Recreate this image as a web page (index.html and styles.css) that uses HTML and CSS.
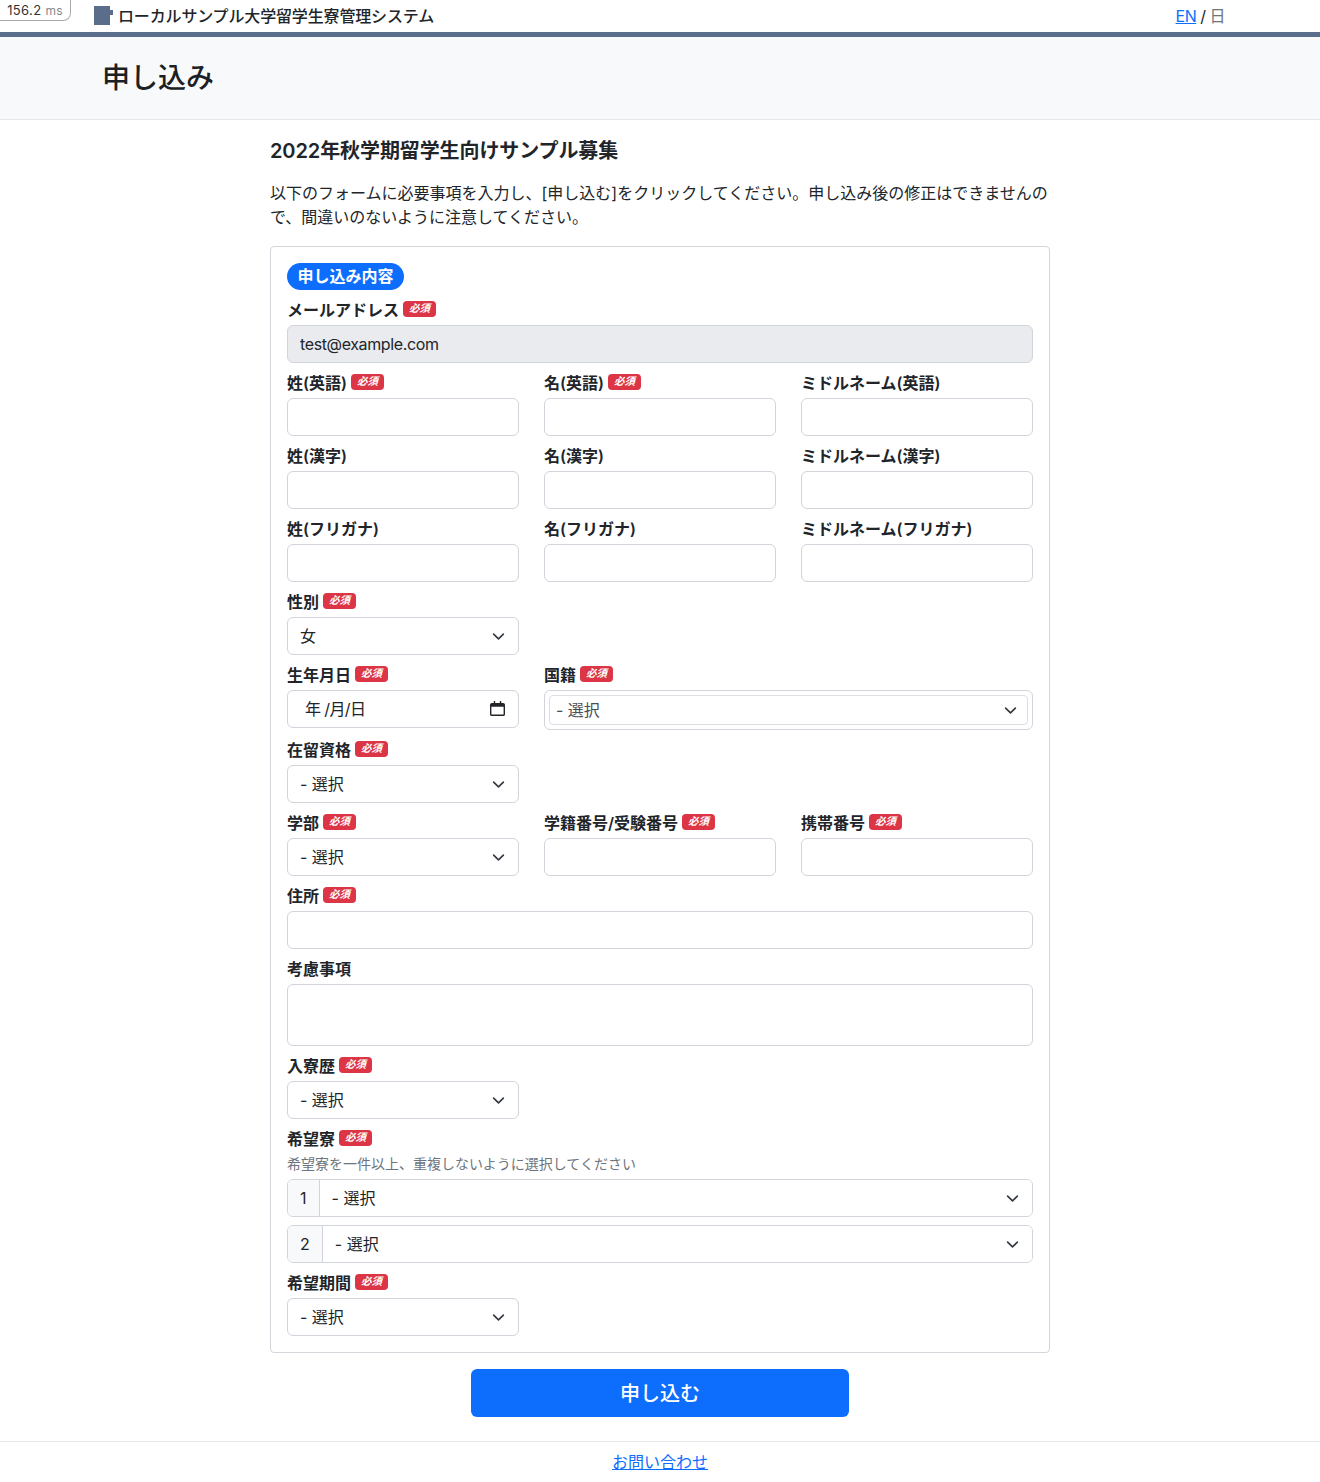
FILE: index.html
```html
<!DOCTYPE html>
<html lang="ja">
<head>
<meta charset="utf-8">
<title>申し込み</title>
<link rel="stylesheet" href="styles.css">
</head>
<body>
<div class="profiler">156.2 <span class="profiler-unit">ms</span></div>
<header class="topbar">
  <div class="brand">
    <svg class="logo" width="20" height="20" viewBox="0 0 20 20"><path d="M0 0H16V4H19V9H16V19H0Z" fill="#5a6d8a"/></svg>
    <span>ローカルサンプル大学留学生寮管理システム</span>
  </div>
  <div class="lang"><a href="#">EN</a> / <span class="lang-current">日</span></div>
</header>
<div class="titleband"><h1>申し込み</h1></div>
<main class="main">
  <h2>2022年秋学期留学生向けサンプル募集</h2>
  <p class="lead">以下のフォームに必要事項を入力し、[申し込む]をクリックしてください。申し込み後の修正はできませんので、間違いのないように注意してください。</p>
  <form class="card">
    <div class="pill">申し込み内容</div>
    <div class="field">
      <label class="lbl">メールアドレス <span class="req">必須</span></label>
      <input class="ctl ctl-disabled" value="test@example.com" disabled>
    </div>
    <div class="grid">
      <div class="field"><label class="lbl">姓(英語) <span class="req">必須</span></label><input class="ctl"></div>
      <div class="field"><label class="lbl">名(英語) <span class="req">必須</span></label><input class="ctl"></div>
      <div class="field"><label class="lbl">ミドルネーム(英語)</label><input class="ctl"></div>
      <div class="field"><label class="lbl">姓(漢字)</label><input class="ctl"></div>
      <div class="field"><label class="lbl">名(漢字)</label><input class="ctl"></div>
      <div class="field"><label class="lbl">ミドルネーム(漢字)</label><input class="ctl"></div>
      <div class="field"><label class="lbl">姓(フリガナ)</label><input class="ctl"></div>
      <div class="field"><label class="lbl">名(フリガナ)</label><input class="ctl"></div>
      <div class="field"><label class="lbl">ミドルネーム(フリガナ)</label><input class="ctl"></div>
      <div class="field"><label class="lbl">性別 <span class="req">必須</span></label><select class="ctl sel"><option>女</option></select></div>
      <div class="field first-col"><label class="lbl">生年月日 <span class="req">必須</span></label>
        <div class="ctl date"><span class="date-text">年 /月/日</span>
          <svg class="date-icon" width="15" height="15" viewBox="0 0 16 16"><path fill="#212529" d="M4 0h1.5v2h5V0H12v2h2a2 2 0 0 1 2 2v10a2 2 0 0 1-2 2H2a2 2 0 0 1-2-2V4a2 2 0 0 1 2-2h2zM1.5 6v8c0 .3.2.5.5.5h12c.3 0 .5-.2.5-.5V6z"/></svg>
        </div>
      </div>
      <div class="field span2"><label class="lbl">国籍 <span class="req">必須</span></label>
        <div class="combo"><select class="combo-inner sel"><option>- 選択</option></select></div>
      </div>
      <div class="field first-col"><label class="lbl">在留資格 <span class="req">必須</span></label><select class="ctl sel"><option>- 選択</option></select></div>
      <div class="field first-col"><label class="lbl">学部 <span class="req">必須</span></label><select class="ctl sel"><option>- 選択</option></select></div>
      <div class="field"><label class="lbl">学籍番号/受験番号 <span class="req">必須</span></label><input class="ctl"></div>
      <div class="field"><label class="lbl">携帯番号 <span class="req">必須</span></label><input class="ctl"></div>
    </div>
    <div class="field"><label class="lbl">住所 <span class="req">必須</span></label><input class="ctl"></div>
    <div class="field"><label class="lbl">考慮事項</label><textarea class="ctl area"></textarea></div>
    <div class="grid">
      <div class="field"><label class="lbl">入寮歴 <span class="req">必須</span></label><select class="ctl sel"><option>- 選択</option></select></div>
    </div>
    <div class="field">
      <label class="lbl">希望寮 <span class="req">必須</span></label>
      <div class="help">希望寮を一件以上、重複しないように選択してください</div>
      <div class="group"><span class="addon">1</span><select class="group-sel sel"><option>- 選択</option></select></div>
      <div class="group group-next"><span class="addon">2</span><select class="group-sel sel"><option>- 選択</option></select></div>
    </div>
    <div class="grid">
      <div class="field"><label class="lbl">希望期間 <span class="req">必須</span></label><select class="ctl sel"><option>- 選択</option></select></div>
    </div>
  </form>
  <div class="actions"><button type="button" class="submit">申し込む</button></div>
</main>
<footer class="footer"><a href="#">お問い合わせ</a></footer>
</body>
</html>
```

FILE: styles.css
```css
* { box-sizing: border-box; }
html, body { margin: 0; padding: 0; }
body {
  font-family: Inter, "Noto Sans CJK JP", sans-serif;
  font-size: 16px;
  line-height: 24px;
  color: #212529;
  background: #fff;
}
a { color: #0d6efd; }

.profiler {
  position: absolute;
  left: 0;
  top: -1px;
  width: 71px;
  height: 22px;
  padding: 0 7px 0 0;
  text-align: right;
  font-size: 13px;
  letter-spacing: 0.35px;
  line-height: 21px;
  color: #333;
  background: #fff;
  border: 1px solid #aaa;
  border-left: 0;
  border-radius: 0 0 8px 0;
}
.profiler-unit { color: #888; font-size: 12px; }

.topbar {
  height: 37px;
  border-bottom: 5px solid #5a6d8a;
  padding: 0 95px 0 94px;
  display: flex;
  justify-content: space-between;
  align-items: center;
}
.brand { display: flex; align-items: center; gap: 4px; font-weight: 500; letter-spacing: -0.15px; }
.logo { display: block; }
.lang { color: #212529; letter-spacing: -0.5px; }
.lang-current { color: #6c757d; }

.titleband {
  height: 83px;
  padding: 0 102px;
  background: #f8f9fa;
  border-bottom: 1px solid #e5e7ea;
  display: flex;
  align-items: center;
}
h1 { margin: 0; font-size: 28px; line-height: 34px; font-weight: 500; color: #1c1f23; }

.main { width: 780px; margin: 0 auto; padding-top: 18px; }
h2 { margin: 0 0 16px; font-size: 20px; line-height: 27px; font-weight: 600; letter-spacing: -0.1px; }
.lead { margin: 0 0 17px; }

.card {
  border: 1px solid #d4d6dc;
  border-radius: 4px;
  padding: 16px;
}
.pill {
  display: block;
  width: 117px;
  height: 27px;
  line-height: 26px;
  text-align: center;
  background: #0d6efd;
  color: #fff;
  font-weight: 700;
  border-radius: 14px;
}
.field { padding-top: 8px; min-width: 0; }
.lbl {
  display: flex;
  align-items: flex-start;
  gap: 4px;
  height: 27px;
  font-weight: 600;
}
.req {
  display: block;
  width: 33px;
  height: 16px;
  margin-top: 3px;
  border-radius: 4px;
  background: #dc3545;
  color: #fff;
  font-size: 10.5px;
  line-height: 16px;
  font-weight: 700;
  font-style: italic;
  text-align: center;
}
.grid {
  display: grid;
  grid-template-columns: repeat(3, 232px);
  column-gap: 25px;
}
.first-col { grid-column: 1; }
.span2 { grid-column: 2 / span 2; }

.ctl {
  display: block;
  width: 100%;
  height: 38px;
  padding: 6px 12px;
  border: 1px solid #d2d4dc;
  border-radius: 6px;
  background: #fff;
  color: #212529;
  font: inherit;
  outline: 0;
}
.ctl-disabled { background: #e9ebef; letter-spacing: -0.38px; }
.sel {
  appearance: none;
  background-image: url("data:image/svg+xml,%3csvg xmlns='http://www.w3.org/2000/svg' viewBox='0 0 16 16'%3e%3cpath fill='none' stroke='%23343a40' stroke-linecap='round' stroke-linejoin='round' stroke-width='2' d='m2 5 6 6 6-6'/%3e%3c/svg%3e");
  background-repeat: no-repeat;
  background-position: right 13px center;
  background-size: 13px 13px;
}
.date {
  display: flex;
  align-items: center;
  justify-content: space-between;
  padding: 0 13px 0 17px;
}
.date-text { letter-spacing: -0.6px; }
.date-icon { margin-bottom: 2px; }
.combo {
  height: 40px;
  padding: 4px;
  border: 1px solid #d2d4dc;
  border-radius: 6px;
}
.combo-inner {
  display: block;
  width: 100%;
  height: 30px;
  padding: 0 6px;
  border: 1px solid #dcdee4;
  border-radius: 4px;
  background-color: #fff;
  color: #495057;
  font: inherit;
  outline: 0;
  background-position: right 10px center;
}
.area { height: 62px; resize: none; }
.help {
  height: 25px;
  font-size: 14px;
  line-height: 20px;
  color: #6c757d;
}
.group {
  display: flex;
  height: 38px;
  border: 1px solid #d2d4dc;
  border-radius: 6px;
  overflow: hidden;
}
.group-next { margin-top: 8px; }
.addon {
  flex: none;
  padding: 0 12px;
  line-height: 36px;
  background: #f8f9fa;
  border-right: 1px solid #d2d4dc;
}
.group-sel {
  flex: 1;
  min-width: 0;
  padding: 0 12px;
  border: 0;
  background-color: #fff;
  color: #212529;
  font: inherit;
  outline: 0;
}

.actions { display: flex; justify-content: center; padding: 16px 0 24px; }
.submit {
  width: 378px;
  height: 48px;
  padding: 2px 0 0;
  border: 0;
  border-radius: 6px;
  background: #0d6efd;
  color: #fff;
  font: inherit;
  font-size: 20px;
  font-weight: 500;
}
.footer {
  height: 41px;
  border-top: 1px solid #e5e7ea;
  padding-top: 8px;
  text-align: center;
}
```
